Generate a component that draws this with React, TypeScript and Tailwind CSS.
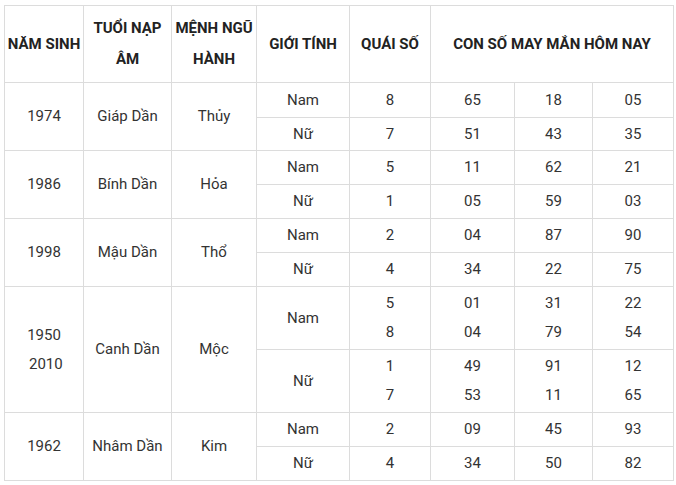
const rows: {
  year: string[];
  napAm: string;
  menh: string;
  h: [number, number];
  nam: { qs: string[]; nums: string[][] };
  nu: { qs: string[]; nums: string[][] };
}[] = [
  {
    year: ["1974"], napAm: "Giáp Dần", menh: "Thủy", h: [35, 33],
    nam: { qs: ["8"], nums: [["65"], ["18"], ["05"]] },
    nu: { qs: ["7"], nums: [["51"], ["43"], ["35"]] },
  },
  {
    year: ["1986"], napAm: "Bính Dần", menh: "Hỏa", h: [34, 34],
    nam: { qs: ["5"], nums: [["11"], ["62"], ["21"]] },
    nu: { qs: ["1"], nums: [["05"], ["59"], ["03"]] },
  },
  {
    year: ["1998"], napAm: "Mậu Dần", menh: "Thổ", h: [34, 34],
    nam: { qs: ["2"], nums: [["04"], ["87"], ["90"]] },
    nu: { qs: ["4"], nums: [["34"], ["22"], ["75"]] },
  },
  {
    year: ["1950", "\u00a02010"], napAm: "Canh Dần", menh: "Mộc", h: [63, 63],
    nam: { qs: ["5", "8"], nums: [["01", "04"], ["31", "79"], ["22", "54"]] },
    nu: { qs: ["1", "7"], nums: [["49", "53"], ["91", "11"], ["12", "65"]] },
  },
  {
    year: ["1962"], napAm: "Nhâm Dần", menh: "Kim", h: [34, 34],
    nam: { qs: ["2"], nums: [["09"], ["45"], ["93"]] },
    nu: { qs: ["4"], nums: [["34"], ["50"], ["82"]] },
  },
];

const td = "border border-[#dcdcdc] text-center align-middle p-0";

function Lines({ items }: { items: string[] }) {
  return (
    <div className="leading-[29px]">
      {items.map((s, i) => (
        <div key={i}>{s}</div>
      ))}
    </div>
  );
}

export default function App() {
  return (
    <div className="bg-white w-[676px] h-[485px] pl-[4px] pt-[5px] font-['Roboto',sans-serif]">
      <table className="table-fixed border-collapse w-[669px] text-[15px] text-[#333]">
        <colgroup>
          <col className="w-[79px]" />
          <col className="w-[88px]" />
          <col className="w-[85px]" />
          <col className="w-[93px]" />
          <col className="w-[81px]" />
          <col className="w-[84px]" />
          <col className="w-[78px]" />
          <col className="w-[81px]" />
        </colgroup>
        <thead>
          <tr className="h-[77px] font-bold text-[#222] leading-[31px]">
            <th className={td}>NĂM SINH</th>
            <th className={td}>TUỔI NẠP<br />ÂM</th>
            <th className={td}>MỆNH NGŨ<br />HÀNH</th>
            <th className={td}>GIỚI TÍNH</th>
            <th className={td}>QUÁI SỐ</th>
            <th className={td} colSpan={3}>CON SỐ MAY MẮN HÔM NAY</th>
          </tr>
        </thead>
        <tbody>
          {rows.map((r) => (
            <>
              <tr key={r.year[0] + "a"} style={{ height: r.h[0] }}>
                <td className={td} rowSpan={2}><Lines items={r.year} /></td>
                <td className={td} rowSpan={2}>{r.napAm}</td>
                <td className={td} rowSpan={2}>{r.menh}</td>
                <td className={td}>Nam</td>
                <td className={td}><Lines items={r.nam.qs} /></td>
                {r.nam.nums.map((n, i) => (
                  <td key={i} className={td}><Lines items={n} /></td>
                ))}
              </tr>
              <tr key={r.year[0] + "b"} style={{ height: r.h[1] }}>
                <td className={td}>Nữ</td>
                <td className={td}><Lines items={r.nu.qs} /></td>
                {r.nu.nums.map((n, i) => (
                  <td key={i} className={td}><Lines items={n} /></td>
                ))}
              </tr>
            </>
          ))}
        </tbody>
      </table>
    </div>
  );
}
